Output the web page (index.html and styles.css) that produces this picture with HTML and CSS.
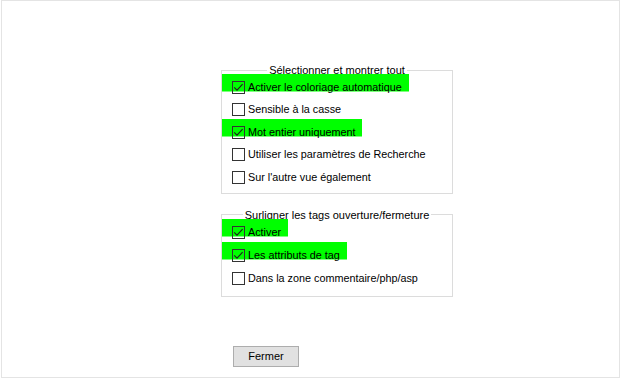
FILE: index.html
```html
<!DOCTYPE html>
<html lang="fr">
<head>
<meta charset="utf-8">
<title>Sélectionner et montrer tout</title>
<link rel="stylesheet" href="styles.css">
</head>
<body>
<div class="frame">
  <fieldset class="group group-a">
    <legend>Sélectionner et montrer tout</legend>
    <div class="row"><span class="item hl"><span class="cb"><svg viewBox="0 0 13 13"><path d="M2.2 6.3 L5 9.2 L10.6 3.2"/></svg></span><span>Activer le coloriage automatique</span></span></div>
    <div class="row"><span class="item"><span class="cb"></span><span>Sensible à la casse</span></span></div>
    <div class="row"><span class="item hl"><span class="cb"><svg viewBox="0 0 13 13"><path d="M2.2 6.3 L5 9.2 L10.6 3.2"/></svg></span><span>Mot entier uniquement</span></span></div>
    <div class="row"><span class="item"><span class="cb"></span><span>Utiliser les paramètres de Recherche</span></span></div>
    <div class="row"><span class="item"><span class="cb"></span><span>Sur l'autre vue également</span></span></div>
  </fieldset>
  <fieldset class="group group-b">
    <legend>Surligner les tags ouverture/fermeture</legend>
    <div class="row"><span class="item hl"><span class="cb"><svg viewBox="0 0 13 13"><path d="M2.2 6.3 L5 9.2 L10.6 3.2"/></svg></span><span>Activer</span></span></div>
    <div class="row"><span class="item hl"><span class="cb"><svg viewBox="0 0 13 13"><path d="M2.2 6.3 L5 9.2 L10.6 3.2"/></svg></span><span>Les attributs de tag</span></span></div>
    <div class="row"><span class="item"><span class="cb"></span><span>Dans la zone commentaire/php/asp</span></span></div>
  </fieldset>
  <button class="btn" type="button">Fermer</button>
</div>
</body>
</html>
```
FILE: styles.css
```css
html, body {
  margin: 0;
  padding: 0;
  background: #ffffff;
}
body {
  font-family: "Liberation Sans", Arial, sans-serif;
  font-size: 11px;
  color: #000000;
}
.frame {
  box-sizing: border-box;
  margin-left: 1px;
  width: 619px;
  height: 378px;
  border: 1px solid #e4e4e4;
  padding: 63px 0 0 219px;
  display: flex;
  flex-direction: column;
  align-items: flex-start;
}
.group {
  box-sizing: border-box;
  margin: 0;
  width: 232px;
  min-width: 0;
  border: 1px solid #dcdcdc;
  padding: 0 0 4px 0;
}
.group-b {
  margin-top: 15px;
  padding-bottom: 6px;
}
.group legend {
  margin: 0 auto;
  padding: 0 2px;
  line-height: 12px;
  font-size: 11px;
}
.row {
  height: 22.5px;
  display: flex;
  align-items: center;
}
.group-b .row {
  height: 23px;
}
.item {
  box-sizing: border-box;
  display: flex;
  align-items: center;
  gap: 3px;
  height: 20px;
  padding: 7px 7px 0 10px;
  margin-top: -7px;
  line-height: 13px;
  font-size: 10.8px;
  white-space: nowrap;
}
.item.hl {
  background: linear-gradient(#00ff00, #00ff00) no-repeat 0 0 / 100% 17.5px;
}
.cb {
  box-sizing: border-box;
  flex: none;
  width: 13px;
  height: 13px;
  border: 1px solid #333333;
  position: relative;
}
.cb svg {
  position: absolute;
  left: -1px;
  top: -1px;
  width: 13px;
  height: 13px;
}
.cb path {
  fill: none;
  stroke: #1e1e1e;
  stroke-width: 1.1;
}
.btn {
  box-sizing: border-box;
  margin: 49px 0 0 12px;
  width: 66px;
  height: 21px;
  padding: 0;
  border: 1px solid #adadad;
  background: #e1e1e1;
  font-family: "Liberation Sans", Arial, sans-serif;
  font-size: 11px;
  color: #000000;
  border-radius: 0;
}
```
